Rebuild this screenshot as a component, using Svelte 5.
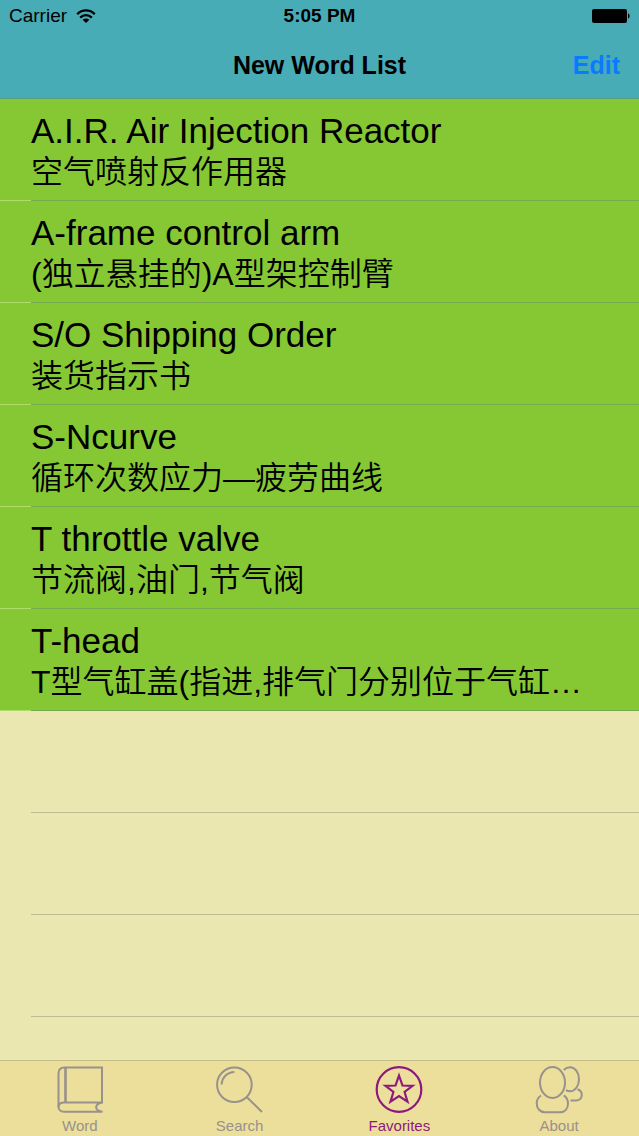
<script lang="ts">
	let words = [
		{ term: 'A.I.R. Air Injection Reactor', meaning: '空气喷射反作用器' },
		{ term: 'A-frame control arm', meaning: '(独立悬挂的)A型架控制臂' },
		{ term: 'S/O Shipping Order', meaning: '装货指示书' },
		{ term: 'S-Ncurve', meaning: '循环次数应力—疲劳曲线' },
		{ term: 'T throttle valve', meaning: '节流阀,油门,节气阀' },
		{ term: 'T-head', meaning: 'T型气缸盖(指进,排气门分别位于气缸…' }
	];

	const tabs = ['Word', 'Search', 'Favorites', 'About'];
	let active = $state('Favorites');
</script>

<div class="screen">
	<header>
		<div class="status">
			<div class="carrier">
				<span>Carrier</span>
				<svg width="20" height="14" viewBox="0 0 20 14" aria-hidden="true">
					<g fill="none" stroke="currentColor" stroke-width="2.3">
						<path d="M1.2 5.2C6.2 0.2 13.8 0.2 18.8 5.2" />
						<path d="M4.2 8.6C7.5 5.3 12.5 5.3 15.8 8.6" />
					</g>
					<path d="M6.6 10.8C8.6 9 11.4 9 13.4 10.8L10 14Z" fill="currentColor" />
				</svg>
			</div>
			<span class="time">5:05 PM</span>
			<svg class="battery" width="38" height="16" viewBox="0 0 38 16" aria-hidden="true">
				<rect x="0" y="1" width="35" height="14" rx="2" />
				<path d="M36 5.5C38.2 6 38.2 10 36 10.5Z" />
			</svg>
		</div>
		<div class="nav">
			<h1>New Word List</h1>
			<button class="edit">Edit</button>
		</div>
	</header>

	<main>
		<ul>
			{#each words as word}
				<li class="word">
					<div class="term">{word.term}</div>
					<div class="meaning" lang="zh-CN">{word.meaning}</div>
				</li>
			{/each}
			{#each { length: 4 } as _}
				<li aria-hidden="true"></li>
			{/each}
		</ul>
	</main>

	<nav class="tabs">
		{#each tabs as tab}
			<button class="tab" class:active={active === tab} onclick={() => (active = tab)}>
				<svg width="48" height="48" viewBox="0 0 48 48" aria-hidden="true">
					{#if tab === 'Word'}
						<path d="M46 36.5V1.5H8.5C4.5 1.5 2.5 4 2.5 7.5V41" />
						<path d="M9.5 1.5V36.5" stroke-width="2.6" />
						<path d="M47 36.5H8C4.5 36.5 2.5 38.5 2.5 41S4.5 45.7 8 45.7H46.5C38 44.5 38 38 46.5 36.5" />
					{:else if tab === 'Search'}
						<circle cx="18.4" cy="18.7" r="17.3" />
						<path d="M5.6 18.5C6 11.5 11 6.3 18.4 6M30.7 31L46 46" />
					{:else if tab === 'Favorites'}
						<circle cx="24" cy="23.5" r="22.3" stroke-width="2.2" />
						<path
							d="M24 9.5L27.5 19.5L37.6 19.8L29.6 26L32.5 35.6L24 30L15.5 35.6L18.4 26L10.4 19.8L20.5 19.5Z"
							stroke-width="2.2"
						/>
					{:else}
						<ellipse cx="17.5" cy="16.5" rx="12.5" ry="15.5" />
						<path d="M6 29.5C3 31.3 1.7 34.2 1.7 37.5C1.7 42.5 5 46.2 10 46.2H25C30 46.2 33 42.5 33 37.5C33 34.2 31.8 31.3 28.8 29.3" />
						<path d="M28.8 4C30.5 2.2 32.7 1.2 35 1.2C40 1.2 44 6.5 44 13.2S40 25.3 35 25.3C33.6 25.3 32.3 24.9 31 24.1" />
						<path d="M42.5 23.2C45.5 24.3 46.8 26.5 46.8 28.8C46.8 32.5 44.2 34.5 41 34.5H35.5" />
					{/if}
				</svg>
				<span>{tab}</span>
			</button>
		{/each}
	</nav>
</div>

<style>
	:global(body) {
		margin: 0;
		background: #eae7b0;
	}

	.screen {
		display: flex;
		flex-direction: column;
		height: 100vh;
		font-family: 'Liberation Sans', 'Noto Sans CJK SC', sans-serif;
		color: #000;
	}

	header {
		background: #48acb7;
		border-bottom: 1px solid #5b9c85;
	}

	.status {
		display: grid;
		grid-template-columns: 1fr auto 1fr;
		align-items: center;
		height: 32px;
		padding: 0 9px;
		font-size: 19px;
		line-height: 32px;
	}

	.carrier {
		display: flex;
		align-items: center;
		gap: 9px;
	}

	.time {
		font-weight: bold;
	}

	.battery {
		justify-self: end;
	}

	.nav {
		display: grid;
		grid-template-columns: 1fr auto 1fr;
		align-items: center;
		height: 66px;
		padding: 0 19px;
	}

	h1 {
		grid-column: 2;
		margin: 0;
		font-size: 25px;
		line-height: 32px;
	}

	.edit {
		justify-self: end;
		padding: 0;
		border: none;
		background: none;
		color: #0a7aff;
		font: bold 25px/32px 'Liberation Sans', sans-serif;
		cursor: pointer;
	}

	main {
		flex: 1;
		min-height: 0;
		overflow-y: auto;
		scrollbar-width: none;
		background: #eae7b0;
	}

	ul {
		margin: 0;
		padding: 0;
		list-style: none;
	}

	li {
		display: flex;
		flex-direction: column;
		box-sizing: border-box;
		height: 102px;
	}

	/* separator, inset to the start of the text */
	li::after {
		content: '';
		height: 1px;
		margin-top: auto;
		background: linear-gradient(to right, transparent 31px, #bdbb93 31px);
	}

	.word {
		padding-top: 12px;
		background: #86c833;
	}

	.word::after {
		background: linear-gradient(to right, #aede69 31px, #75ab4e 31px);
	}

	.term,
	.meaning {
		padding: 0 31px;
		overflow: hidden;
		white-space: nowrap;
		text-overflow: ellipsis;
	}

	.term {
		font-size: 35px;
		line-height: 40px;
	}

	.meaning {
		font-size: 32px;
		font-weight: 350;
		line-height: 42px;
	}

	.tabs {
		display: flex;
		border-top: 1px solid #c5bd87;
		background: #ecdf9b;
	}

	.tab {
		flex: 1;
		display: flex;
		flex-direction: column;
		align-items: center;
		gap: 3px;
		padding: 5px 0 1px;
		border: none;
		background: none;
		color: #98918d;
		font: 15px/18px 'Liberation Sans', sans-serif;
		cursor: pointer;
	}

	.tab svg {
		fill: none;
		stroke: currentColor;
		stroke-width: 2;
	}

	.tab.active {
		color: #8c1a7c;
	}
</style>
